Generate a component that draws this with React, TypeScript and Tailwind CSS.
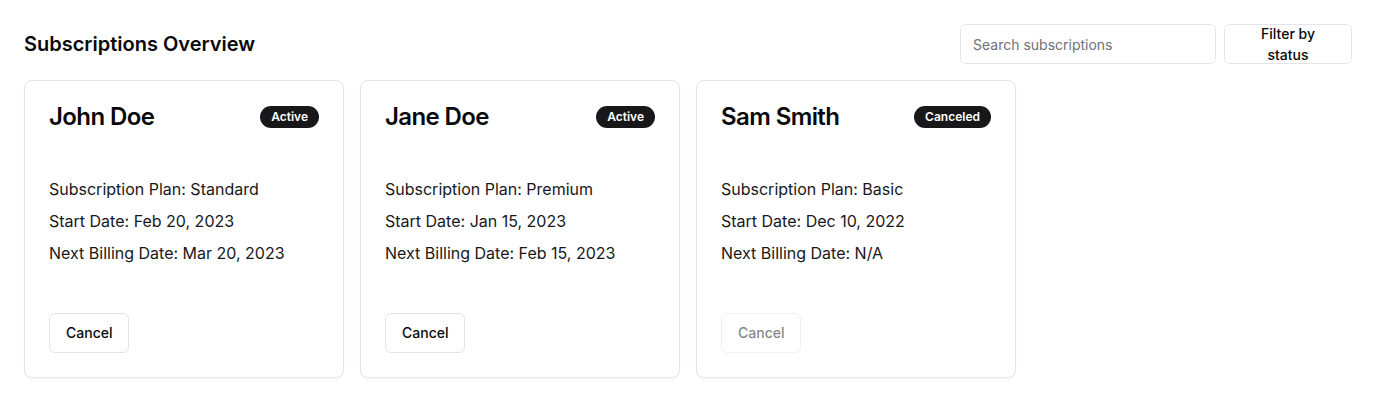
import React from 'react';

type Subscription = {
  name: string;
  status: 'Active' | 'Canceled';
  plan: string;
  startDate: string;
  nextBilling: string;
};

const subscriptions: Subscription[] = [
  { name: 'John Doe', status: 'Active', plan: 'Standard', startDate: 'Feb 20, 2023', nextBilling: 'Mar 20, 2023' },
  { name: 'Jane Doe', status: 'Active', plan: 'Premium', startDate: 'Jan 15, 2023', nextBilling: 'Feb 15, 2023' },
  { name: 'Sam Smith', status: 'Canceled', plan: 'Basic', startDate: 'Dec 10, 2022', nextBilling: 'N/A' },
];

function SubscriptionCard({ sub }: { sub: Subscription }) {
  const canceled = sub.status === 'Canceled';
  return (
    <div className="w-80 rounded-lg border border-[#e4e4e7] bg-white text-[#09090b] shadow-xs">
      <div className="flex items-center justify-between p-6 pb-0">
        <h3 className="text-2xl font-semibold leading-none tracking-tight">{sub.name}</h3>
        <span className="inline-flex items-center rounded-full border border-transparent bg-[#18181b] px-2.5 py-0.5 text-xs font-semibold text-white">
          {sub.status}
        </span>
      </div>
      <div className="mt-12 flex flex-col gap-2 px-6 text-base leading-6 text-[#18181b]">
        <p>Subscription Plan: {sub.plan}</p>
        <p>Start Date: {sub.startDate}</p>
        <p>Next Billing Date: {sub.nextBilling}</p>
      </div>
      <div className="mt-12 px-6 pb-6">
        <button
          disabled={canceled}
          className="inline-flex h-10 items-center justify-center rounded-md border border-[#e4e4e7] bg-white px-4 text-sm font-medium text-[#09090b] disabled:opacity-50"
        >
          Cancel
        </button>
      </div>
    </div>
  );
}

export default function App() {
  return (
    <div className="min-h-screen bg-white p-6 font-['Inter',sans-serif] text-[#09090b]">
      <div className="mb-4 flex h-10 items-center justify-between">
        <h2 className="text-xl font-semibold">Subscriptions Overview</h2>
        <div className="flex items-center gap-2">
          <input
            type="text"
            placeholder="Search subscriptions"
            className="h-10 w-64 rounded-md border border-[#e4e4e7] bg-white px-3 text-sm placeholder:text-[#71717a] outline-none"
          />
          <button className="inline-flex h-10 w-32 items-center justify-center rounded-md border border-[#e4e4e7] bg-white px-4 text-sm leading-[21px] font-medium">
            Filter by status
          </button>
        </div>
      </div>
      <div className="flex gap-4">
        {subscriptions.map((s) => (
          <SubscriptionCard key={s.name} sub={s} />
        ))}
      </div>
    </div>
  );
}
